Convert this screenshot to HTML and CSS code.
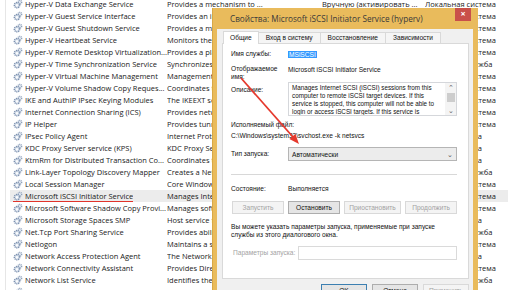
FILE: index.html
```html
<!DOCTYPE html>
<html lang="ru">
<head>
    <meta charset="UTF-8">
    <title>Службы</title>
    <link rel="stylesheet" href="styles.css">
</head>
<body>
    <svg width="0" height="0" class="defs">
        <symbol id="gear" viewBox="0 0 10 10">
            <circle cx="6.8" cy="3.2" r="1.9" fill="#dfe6f0" stroke="#8d9fb8" stroke-width="1.3" stroke-dasharray="0.9 0.6"/>
            <circle cx="4" cy="6.2" r="2.6" fill="#e6ecf4" stroke="#7a8fae" stroke-width="1.6" stroke-dasharray="1.1 0.7"/>
            <circle cx="4" cy="6.2" r="0.9" fill="#fff"/>
        </symbol>
    </svg>

    <div class="list">
        <div class="row"><span class="nm"><svg class="gear"><use href="#gear"/></svg>Hyper-V Data Exchange Service</span><span class="ds">Provides a mechanism to ...</span><span class="st">Вручную (активировать ...</span><span class="lg">Локальная система</span></div>
        <div class="row"><span class="nm"><svg class="gear"><use href="#gear"/></svg>Hyper-V Guest Service Interface</span><span class="ds">Provides an interface for the Hyper-V host</span><span class="st">Вручную</span><span class="lg">Локальная система</span></div>
        <div class="row"><span class="nm"><svg class="gear"><use href="#gear"/></svg>Hyper-V Guest Shutdown Service</span><span class="ds">Provides a mechanism to shut down</span><span class="st">Вручную</span><span class="lg">Локальная система</span></div>
        <div class="row"><span class="nm"><svg class="gear"><use href="#gear"/></svg>Hyper-V Heartbeat Service</span><span class="ds">Monitors the state of this virtual machine</span><span class="st">Вручную</span><span class="lg">Локальная система</span></div>
        <div class="row"><span class="nm"><svg class="gear"><use href="#gear"/></svg>Hyper-V Remote Desktop Virtualization...</span><span class="ds">Provides a platform for communication</span><span class="st">Вручную</span><span class="lg">Локальная система</span></div>
        <div class="row"><span class="nm"><svg class="gear"><use href="#gear"/></svg>Hyper-V Time Synchronization Service</span><span class="ds">Synchronizes the system time</span><span class="st">Вручную</span><span class="lg">Локальная служба</span></div>
        <div class="row"><span class="nm"><svg class="gear"><use href="#gear"/></svg>Hyper-V Virtual Machine Management</span><span class="ds">Management service for Hyper-V</span><span class="st">Автоматически</span><span class="lg">Локальная система</span></div>
        <div class="row"><span class="nm"><svg class="gear"><use href="#gear"/></svg>Hyper-V Volume Shadow Copy Reques...</span><span class="ds">Coordinates the communications</span><span class="st">Вручную</span><span class="lg">Локальная система</span></div>
        <div class="row"><span class="nm"><svg class="gear"><use href="#gear"/></svg>IKE and AuthIP IPsec Keying Modules</span><span class="ds">The IKEEXT service hosts the</span><span class="st">Автоматически</span><span class="lg">Локальная система</span></div>
        <div class="row"><span class="nm"><svg class="gear"><use href="#gear"/></svg>Internet Connection Sharing (ICS)</span><span class="ds">Provides network address translation</span><span class="st">Отключена</span><span class="lg">Локальная система</span></div>
        <div class="row"><span class="nm"><svg class="gear"><use href="#gear"/></svg>IP Helper</span><span class="ds">Provides tunnel connectivity</span><span class="st">Автоматически</span><span class="lg">Локальная система</span></div>
        <div class="row"><span class="nm"><svg class="gear"><use href="#gear"/></svg>IPsec Policy Agent</span><span class="ds">Internet Protocol security (IPsec)</span><span class="st">Вручную</span><span class="lg">Сетевая служба</span></div>
        <div class="row"><span class="nm"><svg class="gear"><use href="#gear"/></svg>KDC Proxy Server service (KPS)</span><span class="ds">KDC Proxy Server service runs</span><span class="st">Вручную</span><span class="lg">Сетевая служба</span></div>
        <div class="row"><span class="nm"><svg class="gear"><use href="#gear"/></svg>KtmRm for Distributed Transaction Co...</span><span class="ds">Coordinates transactions between</span><span class="st">Вручную</span><span class="lg">Сетевая служба</span></div>
        <div class="row"><span class="nm"><svg class="gear"><use href="#gear"/></svg>Link-Layer Topology Discovery Mapper</span><span class="ds">Creates a Network Map</span><span class="st">Вручную</span><span class="lg">Локальная служба</span></div>
        <div class="row"><span class="nm"><svg class="gear"><use href="#gear"/></svg>Local Session Manager</span><span class="ds">Core Windows Service that manages</span><span class="st">Автоматически</span><span class="lg">Локальная система</span></div>
        <div class="row current"><span class="nm"><span class="mark"><svg class="gear"><use href="#gear"/></svg>Microsoft iSCSI Initiator Service</span></span><span class="ds">Manages Internet SCSI (iSCSI)</span><span class="st">Автоматически</span><span class="lg">Локальная система</span></div>
        <div class="row"><span class="nm"><svg class="gear"><use href="#gear"/></svg>Microsoft Software Shadow Copy Provi...</span><span class="ds">Manages software-based volume shadow</span><span class="st">Вручную</span><span class="lg">Локальная система</span></div>
        <div class="row"><span class="nm"><svg class="gear"><use href="#gear"/></svg>Microsoft Storage Spaces SMP</span><span class="ds">Host service for the Microsoft Storage</span><span class="st">Вручную</span><span class="lg">Сетевая служба</span></div>
        <div class="row"><span class="nm"><svg class="gear"><use href="#gear"/></svg>Net.Tcp Port Sharing Service</span><span class="ds">Provides ability to share TCP ports</span><span class="st">Отключена</span><span class="lg">Локальная служба</span></div>
        <div class="row"><span class="nm"><svg class="gear"><use href="#gear"/></svg>Netlogon</span><span class="ds">Maintains a secure channel</span><span class="st">Вручную</span><span class="lg">Локальная система</span></div>
        <div class="row"><span class="nm"><svg class="gear"><use href="#gear"/></svg>Network Access Protection Agent</span><span class="ds">The Network Access Protection (NAP)</span><span class="st">Вручную</span><span class="lg">Сетевая служба</span></div>
        <div class="row"><span class="nm"><svg class="gear"><use href="#gear"/></svg>Network Connectivity Assistant</span><span class="ds">Provides DirectAccess status</span><span class="st">Вручную</span><span class="lg">Локальная система</span></div>
        <div class="row"><span class="nm"><svg class="gear"><use href="#gear"/></svg>Network List Service</span><span class="ds">Identifies the networks to which</span><span class="st">Вручную</span><span class="lg">Локальная служба</span></div>
        <div class="row"><span class="nm"><svg class="gear"><use href="#gear"/></svg>Network Location Awareness</span><span class="ds">Collects and stores configuration</span><span class="st">Автоматически</span><span class="lg">Сетевая служба</span></div>
    </div>

    <div class="dialog">
        <div class="titlebar">
            <span class="title">Свойства: Microsoft iSCSI Initiator Service (hyperv)</span>
            <span class="close">×</span>
        </div>
        <div class="client">
            <div class="tabs">
                <span class="tab active">Общие</span>
                <span class="tab">Вход в систему</span>
                <span class="tab">Восстановление</span>
                <span class="tab">Зависимости</span>
            </div>
            <div class="panel">
                <div class="field f-name">
                    <span class="label">Имя службы:</span>
                    <span><span class="selected">MSiSCSI</span></span>
                </div>
                <div class="field f-display">
                    <span class="label">Отображаемое<br>имя:</span>
                    <span>Microsoft iSCSI Initiator Service</span>
                </div>
                <div class="field f-desc">
                    <span class="label">Описание:</span>
                    <div class="memo">
                        <div class="memo-text">Manages Internet SCSI (iSCSI) sessions from this computer to remote iSCSI target devices. If this service is stopped, this computer will not be able to login or access iSCSI targets. If this service is</div>
                        <div class="scroll">
                            <span class="arr">&#8963;</span>
                            <span class="thumb"></span>
                            <span class="arr">&#8964;</span>
                        </div>
                    </div>
                </div>
                <div class="exe-label">Исполняемый файл:</div>
                <div class="exe-path">C:\Windows\system32\svchost.exe -k netsvcs</div>
                <div class="field f-start">
                    <span class="label">Тип запуска:</span>
                    <div class="combo">Автоматически<span class="chev">&#8964;</span></div>
                </div>
                <div class="sep"></div>
                <div class="field f-state">
                    <span class="label">Состояние:</span>
                    <span>Выполняется</span>
                </div>
                <div class="buttons">
                    <span class="btn disabled">Запустить</span>
                    <span class="btn">Остановить</span>
                    <span class="btn disabled">Приостановить</span>
                    <span class="btn disabled">Продолжить</span>
                </div>
                <p class="hint">Вы можете указать параметры запуска, применяемые при запуске службы из этого диалогового окна.</p>
                <div class="params">
                    <span class="label disabled-text">Параметры запуска:</span>
                    <span class="input"></span>
                </div>
            </div>
            <div class="actions">
                <span class="btn default">OK</span>
                <span class="btn">Отмена</span>
                <span class="btn disabled">Применить</span>
            </div>
        </div>
    </div>

    <svg class="arrow" width="516" height="290" viewBox="0 0 516 290">
        <line x1="241" y1="78" x2="293" y2="137" stroke="#e5392d" stroke-width="1.8"/>
        <polygon points="299,144 289.4,139.1 295.4,133.9" fill="#e5392d"/>
    </svg>
</body>
</html>
```

FILE: styles.css
```css
* {
    box-sizing: border-box;
}
body {
    margin: 0;
    width: 516px;
    height: 290px;
    overflow: hidden;
    position: relative;
    background: #fff;
    font-family: "Open Sans", Arial, sans-serif;
}
.defs {
    position: absolute;
}

/* services list behind the dialog */
.list {
    margin: -2px 0 0 5px;
    padding-left: 4px;
    border-left: 1px solid #e6e6e6;
    width: 503px;
}
.row {
    display: grid;
    grid-template-columns: 154px 155px 103px 83px;
    height: 12px;
    align-items: center;
    padding-left: 3px;
    font-size: 7.5px;
    color: #1a1a1a;
    white-space: nowrap;
}
.row span {
    overflow: hidden;
}
.row.current {
    background: #ececec;
}
.nm {
    display: flex;
    align-items: center;
}
.gear {
    width: 10px;
    height: 10px;
    margin-right: 2px;
    flex: none;
}
.mark {
    display: flex;
    align-items: center;
    margin-left: -1px;
    padding-left: 1px;
    border-bottom: 1.5px solid #e0342b;
    height: 12px;
}

/* properties dialog */
.dialog {
    position: absolute;
    left: 212px;
    top: 8px;
    width: 266px;
    height: 290px;
    background: #e9bb5c;
    border-left: 1px solid #d9a846;
}
.titlebar {
    display: flex;
    height: 21px;
    align-items: center;
    padding-left: 17px;
}
.title {
    font-size: 8.2px;
    color: #3a3a3a;
}
.close {
    align-self: flex-start;
    margin-left: auto;
    margin-right: 7px;
    width: 16px;
    height: 13px;
    background: #c9504a;
    color: #fff;
    font-size: 9px;
    font-weight: bold;
    line-height: 12px;
    text-align: center;
}
.client {
    margin: 0 5px 0 4px;
    height: 270px;
    background: #f0f0f0;
    padding: 2px 4px 0 5px;
    font-family: "Liberation Sans", Arial, sans-serif;
    font-size: 6.6px;
    color: #111;
}
.tabs {
    display: flex;
    align-items: flex-end;
    height: 12px;
    padding-left: 1px;
}
.tab {
    height: 11px;
    padding: 0 7px;
    line-height: 10px;
    background: #f5f5f5;
    border: 1px solid #d9d9d9;
    border-bottom: none;
    margin-right: -1px;
}
.tab.active {
    height: 13px;
    margin-bottom: -1px;
    background: #fff;
    position: relative;
    padding: 0 6px;
    line-height: 12px;
}
.panel {
    height: 236px;
    background: #fff;
    border: 1px solid #d9d9d9;
    padding: 0 11px 0 8px;
}
.field {
    display: grid;
    grid-template-columns: 57px 1fr;
    align-items: center;
}
.label {
    line-height: 8px;
}
.f-name {
    margin-top: 5px;
    height: 10px;
}
.selected {
    background: #3399ff;
    color: #fff;
    padding: 0 1px;
}
.f-display {
    margin-top: 6px;
    align-items: start;
}
.f-display span:last-child {
    line-height: 8px;
    padding-top: 1px;
}
.f-desc {
    margin-top: 1px;
    align-items: start;
}
.f-desc .label {
    padding-top: 4px;
}
.memo {
    display: flex;
    height: 34px;
    border: 1px solid #d5d7db;
    background: #fff;
}
.memo-text {
    flex: 1;
    padding: 1px 3px;
    line-height: 8px;
    font-size: 6.3px;
    overflow: hidden;
}
.scroll {
    width: 11px;
    display: flex;
    flex-direction: column;
    align-items: center;
    background: #f4f4f4;
    color: #606060;
    font-size: 7px;
}
.arr {
    height: 9px;
    line-height: 9px;
}
.thumb {
    width: 8px;
    height: 10px;
    background: #cdcdcd;
    margin: 1px 0 4px;
}
.exe-label {
    margin-top: 5px;
    line-height: 8px;
}
.exe-path {
    margin-top: 3px;
    line-height: 8px;
}
.f-start {
    margin-top: 7px;
}
.combo {
    display: flex;
    justify-content: space-between;
    height: 14px;
    padding: 0 3px 0 3px;
    line-height: 13px;
    background: #ececec;
    border: 1px solid #b5b5b5;
}
.chev {
    color: #555;
    font-size: 7px;
}
.sep {
    margin-top: 13px;
    border-top: 1px solid #d8d8d8;
}
.f-state {
    margin-top: 10px;
    line-height: 8px;
}
.buttons {
    display: flex;
    gap: 4px;
    margin-top: 8px;
    padding-left: 1px;
}
.btn {
    height: 13px;
    line-height: 11px;
    text-align: center;
    border: 1px solid #adadad;
    background: #e5e5e5;
    color: #111;
}
.buttons .btn {
    width: 52px;
}
.buttons .btn:nth-child(3) {
    width: 57px;
}
.btn.disabled {
    background: #f4f4f4;
    border-color: #d9d9d9;
    color: #a3a3a3;
}
.hint {
    margin: 9px 0 0;
    line-height: 8px;
}
.params {
    display: flex;
    align-items: center;
    gap: 3px;
    margin-top: 7px;
    padding-left: 2px;
}
.disabled-text {
    color: #a3a3a3;
}
.input {
    flex: 1;
    height: 14px;
    border: 1px solid #dadada;
    background: #fff;
}
.actions {
    display: flex;
    justify-content: flex-end;
    gap: 5px;
    margin-top: 5px;
}
.actions .btn {
    width: 46px;
    height: 14px;
}
.btn.default {
    border-color: #3c7fb1;
}

.arrow {
    position: absolute;
    left: 0;
    top: 0;
    pointer-events: none;
}
```
